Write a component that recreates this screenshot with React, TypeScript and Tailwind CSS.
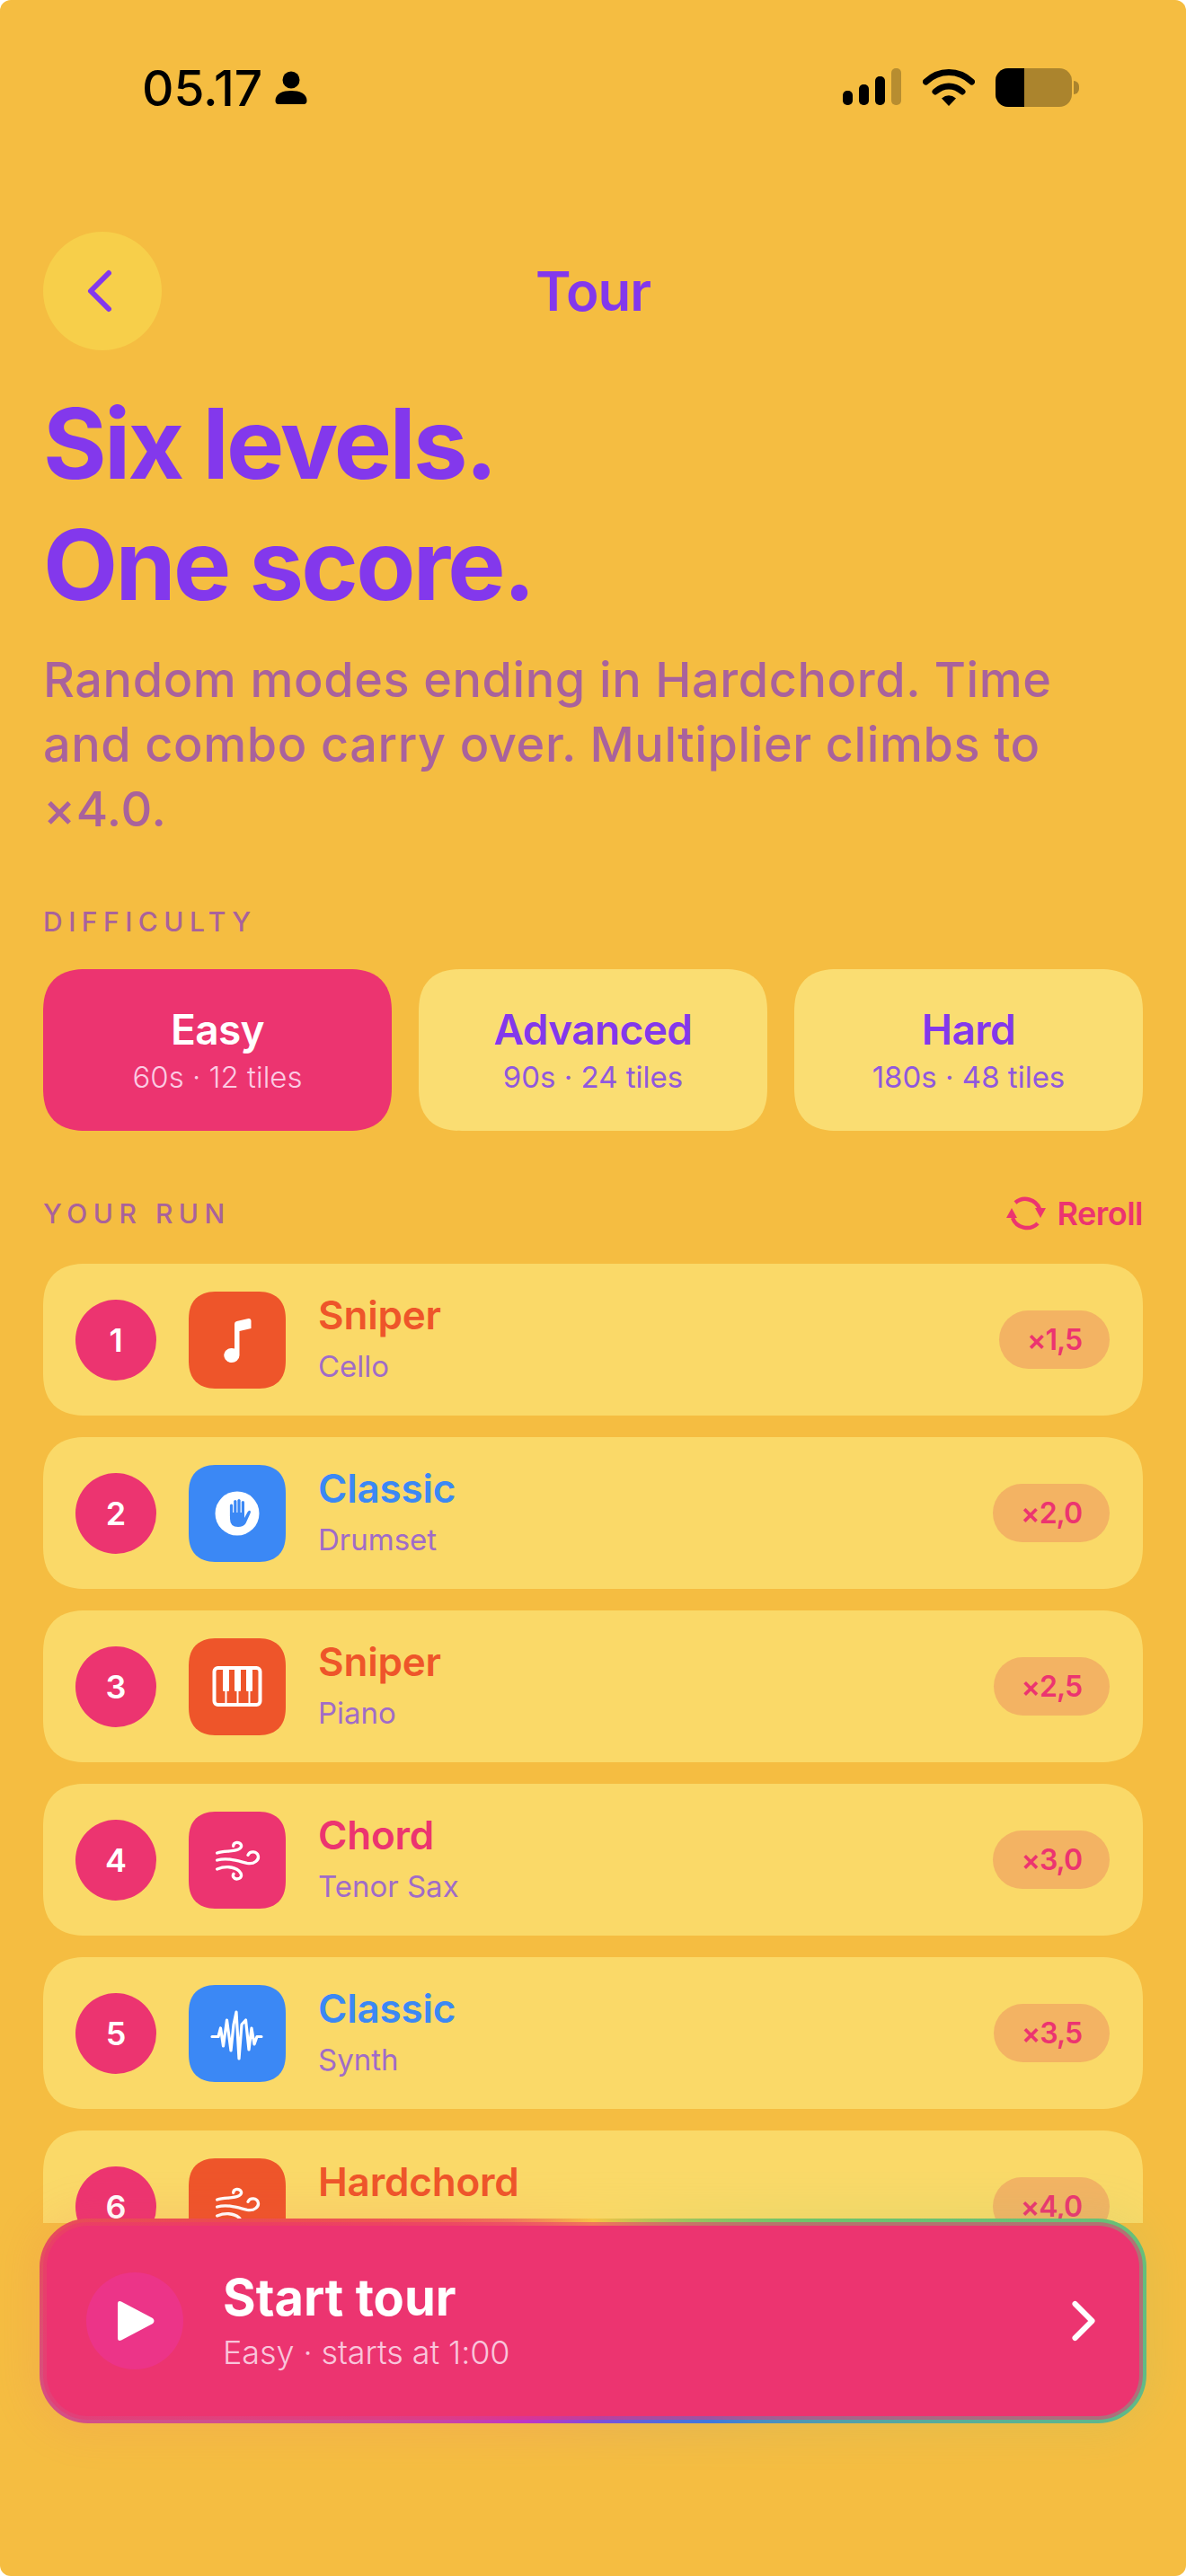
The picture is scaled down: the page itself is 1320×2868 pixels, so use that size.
import { ChevronLeft, ChevronRight } from 'lucide-react';
import type { ReactNode } from 'react';

const sans = "font-['Inter',sans-serif]";

function MusicIcon() {
  return (
    <svg width="108" height="108" viewBox="0 0 108 108" fill="white">
      <path d="M51 36 Q51 33.5 53.5 33 L66.5 30 Q69.5 29.5 69.5 32.5 L69.5 41 L56.5 44 L56.5 71 A8.6 8 0 1 1 51 63.5 Z" />
    </svg>
  );
}

function HandIcon() {
  return (
    <svg width="108" height="108" viewBox="0 0 108 108">
      <circle cx="54" cy="54" r="24.5" fill="white" />
      <g stroke="#3b88f5" strokeWidth="3.2" strokeLinecap="round" fill="none">
        <path d="M47.5 45 V57" />
        <path d="M51.8 40.5 V56" />
        <path d="M56 39.5 V56" />
        <path d="M60.4 41.5 V57" />
      </g>
      <path
        d="M46 53 H62 V59 L65.5 52.5 Q67 50 68.5 51 Q69.5 52 68.5 54 L63.5 65 Q61 69 55 69 Q46 69 46 60 Z"
        fill="#3b88f5"
      />
    </svg>
  );
}

function PianoIcon() {
  return (
    <svg width="108" height="108" viewBox="0 0 108 108" fill="white">
      <rect x="28.5" y="33" width="51" height="41" rx="4" fill="none" stroke="white" strokeWidth="4" />
      <rect x="38" y="33" width="7" height="26" rx="1" />
      <rect x="51" y="33" width="7" height="26" rx="1" />
      <rect x="64" y="33" width="7" height="26" rx="1" />
      <rect x="40.5" y="58" width="2" height="15" />
      <rect x="53.5" y="58" width="2" height="15" />
      <rect x="66.5" y="58" width="2" height="15" />
    </svg>
  );
}

function WindIcon() {
  return (
    <svg width="108" height="108" viewBox="30 30 324 324" fill="none" stroke="white" strokeWidth="10" strokeLinecap="round">
      <path d="M125 168 C150 160 180 165 198 155 C212 147 205 132 190 133 C183 134 179 139 179 145" />
      <path d="M125 192 C160 182 195 195 225 202 C250 207 265 190 262 178 C258 162 235 160 228 175" />
      <path d="M125 222 C150 212 180 212 198 228 C212 242 205 255 190 255 C180 254 175 245 180 238" />
    </svg>
  );
}

function WaveIcon() {
  return (
    <svg width="108" height="108" viewBox="0 0 108 108" fill="none" stroke="white" strokeWidth="3.2" strokeLinecap="round" strokeLinejoin="round">
      <path d="M26 57.5 H33 L35.5 48 L38.5 68 L42.5 39 L47 73 L50 44 L53 30 L56 82 L59 44 L63.5 39 L67 72 L70 48 L73 66 L76 57.5 H81" />
    </svg>
  );
}

function RerollIcon() {
  return (
    <svg width="44" height="38" viewBox="0 0 44 38" fill="none">
      <path d="M10 7 A17 17 0 0 1 37 14" stroke="#ec3470" strokeWidth="4.5" />
      <path d="M35 30 A17 17 0 0 1 7 24" stroke="#ec3470" strokeWidth="4.5" />
      <path d="M32 13 H44 L38 24 Z" fill="#ec3470" />
      <path d="M0 24 H12 L6 13 Z" fill="#ec3470" />
    </svg>
  );
}

function StatusBar() {
  return (
    <div className="flex h-[258px] items-start justify-between pl-[158px] pr-[119px] pt-[72px]">
      <div className="flex items-center gap-[14px] text-black">
        <span className={`${sans} text-[55px] font-medium leading-[52px]`}>05.17</span>
        <svg width="36" height="38" viewBox="0 0 36 38" fill="black">
          <circle cx="18" cy="10" r="9.5" />
          <path d="M0.5 33 C0.5 25 9 22 18 22 C27 22 35.5 25 35.5 33 Q35.5 37 32 37 H4 Q0.5 37 0.5 33 Z" />
        </svg>
      </div>
      <div className="flex items-start pt-[4px]">
        <svg width="66" height="42" viewBox="0 0 66 42" fill="black">
          <rect x="0" y="25" width="11" height="16" rx="5" />
          <rect x="18" y="18" width="11" height="23" rx="5" />
          <rect x="36" y="9" width="11" height="32" rx="5" />
          <rect x="54" y="0" width="11" height="41" rx="5" opacity="0.25" />
        </svg>
        <svg className="ml-[23px]" width="58" height="43" viewBox="0 0 58 43" fill="none" stroke="black" strokeLinecap="round">
          <path d="M3.5 15 C18 1 40 1 54.5 15" strokeWidth="7" />
          <path d="M14 26 C23 18 35 18 44 26" strokeWidth="7" />
          <path d="M21 33.5 Q29 27 37 33.5 L29 42 Z" fill="black" strokeWidth="0" />
        </svg>
        <div className="ml-[23px] flex items-center">
          <div className="flex h-[43px] w-[85px] overflow-hidden rounded-[14px] bg-black/30">
            <div className="w-[32px] bg-black" />
          </div>
          <div className="ml-[2px] h-[15px] w-[6px] rounded-r-[6px] bg-black/30" />
        </div>
      </div>
    </div>
  );
}

function Level({ name, sub, active }: { name: string; sub: string; active?: boolean }) {
  return (
    <div
      className={`flex h-[180px] flex-col items-center justify-center rounded-[48px] pb-[2px] [corner-shape:superellipse(1.3)] ${
        active ? 'bg-[#ec3470]' : 'bg-[#fadd72]'
      }`}
    >
      <div className={`${sans} text-[46px] font-semibold leading-[56px] tracking-[-0.6px] ${active ? 'text-white' : 'text-[#8338ec]'}`}>
        {name}
      </div>
      <div className={`${sans} mt-[5px] text-[33px] leading-[40px] ${active ? 'font-light text-[#fbcbe3]' : 'text-[#9058de]'}`}>
        {sub}
      </div>
    </div>
  );
}

function RunRow({
  n,
  tile,
  icon,
  title,
  titleColor,
  sub,
  mult,
}: {
  n: number;
  tile: string;
  icon: ReactNode;
  title: string;
  titleColor: string;
  sub: string;
  mult: string;
}) {
  return (
    <div className="flex h-[169px] shrink-0 items-center rounded-[48px] bg-[#fad968] pl-[36px] pr-[37px] [corner-shape:superellipse(1.3)]">
      <div className={`${sans} flex h-[90px] w-[90px] items-center justify-center rounded-full bg-[#ec3470] text-[36px] font-semibold text-white`}>
        {n}
      </div>
      <div className={`ml-[36px] flex h-[108px] w-[108px] items-center justify-center rounded-[32px] [corner-shape:superellipse(1.3)] ${tile}`}>{icon}</div>
      <div className="ml-[36px] min-w-0 flex-1 pb-[3px]">
        <div className={`${sans} text-[44px] font-semibold leading-[54px] tracking-[-0.2px] ${titleColor}`}>{title}</div>
        <div className={`${sans} mt-[8px] text-[33px] leading-[44px] text-[#a06cc8]`}>{sub}</div>
      </div>
      <div className={`${sans} flex h-[65px] items-center rounded-full bg-[#f3b363] px-[31px] text-[32px] font-semibold tracking-[-1px] text-[#ec3470]`}>
        {mult}
      </div>
    </div>
  );
}

export default function App() {
  return (
    <div className="relative h-[2868px] w-[1320px] overflow-hidden rounded-[12px] bg-[#f5bd41]">
      <StatusBar />

      <div className="grid h-[132px] grid-cols-3 items-center px-12">
        <div className="flex h-[132px] w-[132px] items-center justify-center rounded-full bg-[#f7cf4a]">
          <ChevronLeft size={80} strokeWidth={1.8} className="-ml-[6px] text-[#8338ec]" />
        </div>
        <div className={`${sans} text-center text-[60px] font-semibold tracking-[-1px] text-[#8338ec]`}>Tour</div>
      </div>

      <div className="px-12">
        <h1 className={`${sans} mt-[36px] text-[108px] font-bold leading-[135px] tracking-[-2.7px] text-[#8338ec]`}>
          Six levels.
          <br />
          One score.
        </h1>
        <p className={`${sans} mt-[25px] max-w-[1180px] text-[54px] font-medium leading-[72px] tracking-[0.6px] text-[#a9629c]`}>
          Random modes ending in Hardchord. Time and combo carry over. Multiplier climbs to ×4.0.
        </p>

        <div className={`${sans} mt-[71px] text-[30px] font-medium leading-[36px] tracking-[6.5px] text-[#a9629c]`}>DIFFICULTY</div>
        <div className="mt-[35px] grid grid-cols-3 gap-[30px]">
          <Level name="Easy" sub="60s · 12 tiles" active />
          <Level name="Advanced" sub="90s · 24 tiles" />
          <Level name="Hard" sub="180s · 48 tiles" />
        </div>

        <div className="mt-[72px] flex h-[40px] items-center justify-between">
          <div className={`${sans} text-[30px] font-medium tracking-[6.5px] text-[#a9629c]`}>YOUR RUN</div>
          <div className="flex items-center gap-[12px]">
            <RerollIcon />
            <span className={`${sans} text-[36px] font-semibold tracking-[-0.5px] text-[#ec3470]`}>Reroll</span>
          </div>
        </div>

        <div className="mt-[36px] flex h-[1068px] flex-col gap-[24px] overflow-hidden">
          <RunRow n={1} tile="bg-[#ee552a]" icon={<MusicIcon />} title="Sniper" titleColor="text-[#ee552a]" sub="Cello" mult="×1,5" />
          <RunRow n={2} tile="bg-[#3b88f5]" icon={<HandIcon />} title="Classic" titleColor="text-[#3b88f5]" sub="Drumset" mult="×2,0" />
          <RunRow n={3} tile="bg-[#ee552a]" icon={<PianoIcon />} title="Sniper" titleColor="text-[#ee552a]" sub="Piano" mult="×2,5" />
          <RunRow n={4} tile="bg-[#ec3470]" icon={<WindIcon />} title="Chord" titleColor="text-[#ec3470]" sub="Tenor Sax" mult="×3,0" />
          <RunRow n={5} tile="bg-[#3b88f5]" icon={<WaveIcon />} title="Classic" titleColor="text-[#3b88f5]" sub="Synth" mult="×3,5" />
          <RunRow n={6} tile="bg-[#ee552a]" icon={<WindIcon />} title="Hardchord" titleColor="text-[#ee552a]" sub={'\u00a0'} mult="×4,0" />
        </div>
      </div>

      {/* Start button floats over the list */}
      <div className="absolute left-[44px] top-[2470px] h-[228px] w-[1232px]">
        <div className="absolute -inset-[12px] rounded-[66px] bg-[conic-gradient(#f6c445_0deg,#6fc36a_65deg,#5fb98a_100deg,#3f78dd_130deg,#7b50da_175deg,#c035c5_215deg,#d0508f_255deg,#ec4b50_285deg,#f0775a_320deg,#f6c445_360deg)] opacity-10 blur-xl" />
        <div className="relative h-full rounded-[54px] bg-[conic-gradient(#f6c445_0deg,#6fc36a_65deg,#5fb98a_100deg,#3f78dd_130deg,#7b50da_175deg,#c035c5_215deg,#d0508f_255deg,#ec4b50_285deg,#f0775a_320deg,#f6c445_360deg)] p-[4px]">
          <div className="h-full rounded-[50px] bg-[#ec3470]/55 p-[4px]">
            <div className="flex h-full items-center rounded-[46px] bg-[#ec3470] pl-[44px] pr-[24px]">
              <div className="flex h-[108px] w-[108px] items-center justify-center rounded-full bg-[#ec3488]">
                <svg width="44" height="46" viewBox="0 0 44 46" fill="white" className="ml-[2px]">
                  <path d="M2 4 Q2 0 6 1.5 L41 20 Q44 23 41 26 L6 44.5 Q2 46 2 42 Z" />
                </svg>
              </div>
              <div className="ml-[44px] flex-1">
                <div className={`${sans} text-[56px] font-bold leading-[62px] text-white`}>Start tour</div>
                <div className={`${sans} mt-[8px] text-[36px] font-light leading-[44px] tracking-[-0.1px] text-[#f9c5db]`}>Easy · starts at 1:00</div>
              </div>
              <ChevronRight size={76} strokeWidth={1.9} className="text-white" />
            </div>
          </div>
        </div>
      </div>
    </div>
  );
}
